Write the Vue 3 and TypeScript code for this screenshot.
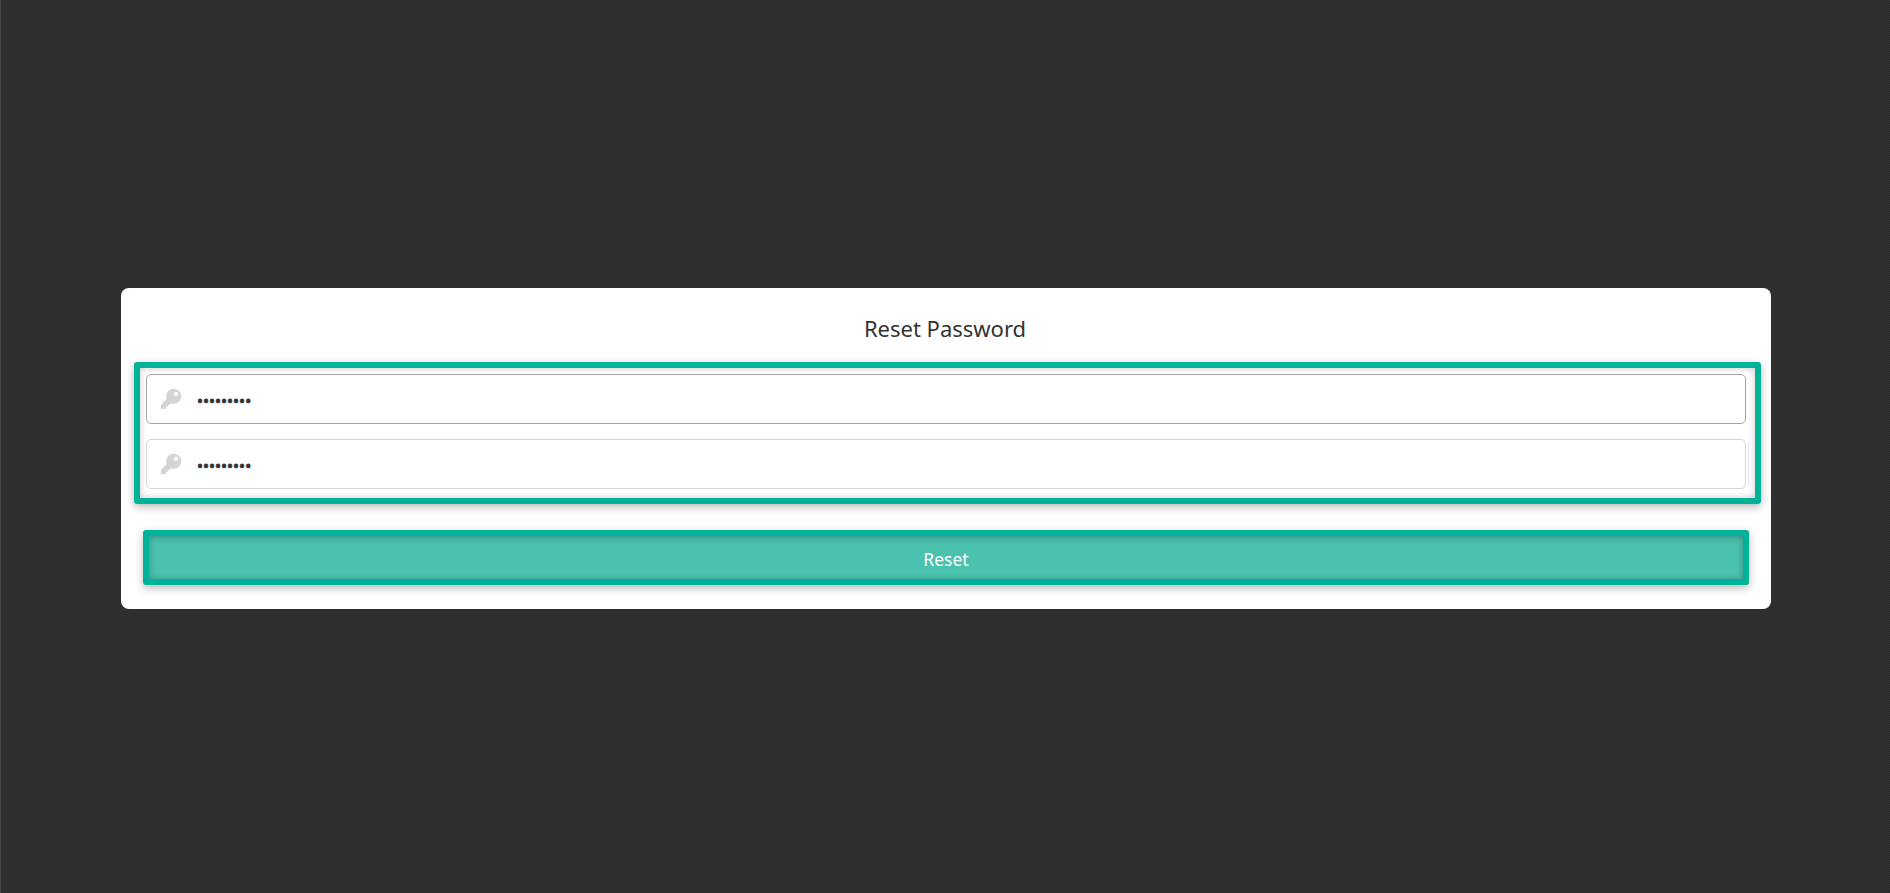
<template>
  <main class="page">
    <section class="card">
      <h2 class="card__title">Reset Password</h2>
      <form class="reset-form" @submit.prevent>
        <div class="reset-form__fields">
          <label v-for="(field, i) in fields" :key="field.name" class="field" :class="i === 0 ? 'field--active' : 'field--idle'">
            <svg class="field__icon" width="22" height="22" viewBox="0 0 24 24" fill="#d4d4d4">
              <path fill-rule="evenodd" d="M15 .8a8.2 8.2 0 1 1-2.9 15.87L10.6 18.4H8.4v2H6.4v1.6c0 .6-.5 1-1 1H2.2c-.7 0-1.2-.5-1.2-1.2v-2.5c0-.4.1-.7.4-1L7.3 12A8.2 8.2 0 0 1 15 .8Zm2.5 3.4a2.3 2.3 0 1 0 0 4.6 2.3 2.3 0 0 0 0-4.6Z" />
            </svg>
            <input class="field__input" type="password" :name="field.name" :value="field.value" />
          </label>
        </div>
        <div class="reset-form__action">
          <button class="reset-form__submit" type="submit">Reset</button>
        </div>
      </form>
    </section>
  </main>
</template>

<script setup lang="ts">
const fields: { name: string; value: string }[] = [
  { name: 'password', value: 'secret123' },
  { name: 'confirm', value: 'secret123' },
]
</script>

<style scoped>
.page {
  min-height: 893px;
  box-sizing: border-box;
  padding: 288px 119px 0 120px;
  border-left: 1px solid #444;
  background-color: #2f2f2f;
  background-image: repeating-conic-gradient(#2b2b2b 0 25%, #333 0 50%);
  background-size: 2px 2px;
  font-family: "Noto Sans", "Open Sans", sans-serif;
}
.card {
  background: #fff;
  border-radius: 8px;
  padding: 24px 0 0;
  height: 321px;
  box-sizing: border-box;
}
.card__title {
  margin: 0 2px 17px 0;
  font-size: 22px;
  line-height: 33px;
  font-weight: 400;
  color: #333;
  text-align: center;
}
.reset-form {
  padding: 0 10px 0 13px;
}
.reset-form__fields {
  display: flex;
  flex-direction: column;
  gap: 15px;
  padding: 6px 9px 9px 6px;
  border: 6px solid #00b398;
  border-radius: 3px;
  box-shadow: 0 3px 8px rgba(0, 0, 0, 0.28), inset 0 0 7px rgba(0, 0, 0, 0.22);
}
.field {
  position: relative;
  display: flex;
  align-items: center;
  height: 50px;
  box-sizing: border-box;
  padding-left: 13px;
  gap: 15px;
  border: 1px solid #d5d5dc;
  border-radius: 5px;
  background: #fff;
}
.field--active { border-color: #a6a6a6; }
.field--idle::after {
  content: "";
  position: absolute;
  top: 1px;
  bottom: 3px;
  right: -4px;
  width: 1px;
  background: #e6e6f0;
}
.field__icon { margin-top: -1px; }
.field__input {
  flex: 1;
  min-width: 0;
  border: none;
  outline: none;
  padding: 3px 0 0;
  background: transparent;
  font: 16px "Noto Sans", sans-serif;
  color: #333;
  -webkit-text-stroke: 0.7px #333;
}
.reset-form__action { padding: 26px 12px 0 9px; }
.reset-form__submit {
  display: block;
  width: 100%;
  height: 55px;
  box-sizing: border-box;
  border: 6px solid #00b398;
  border-radius: 3px;
  background: #4bc2ad;
  box-shadow: 0 3px 8px rgba(0, 0, 0, 0.28), inset 0 1px 7px rgba(0, 0, 0, 0.28);
  color: #fff;
  font: 17.5px "Noto Sans", sans-serif;
  padding: 2px 0 0;
}
</style>
